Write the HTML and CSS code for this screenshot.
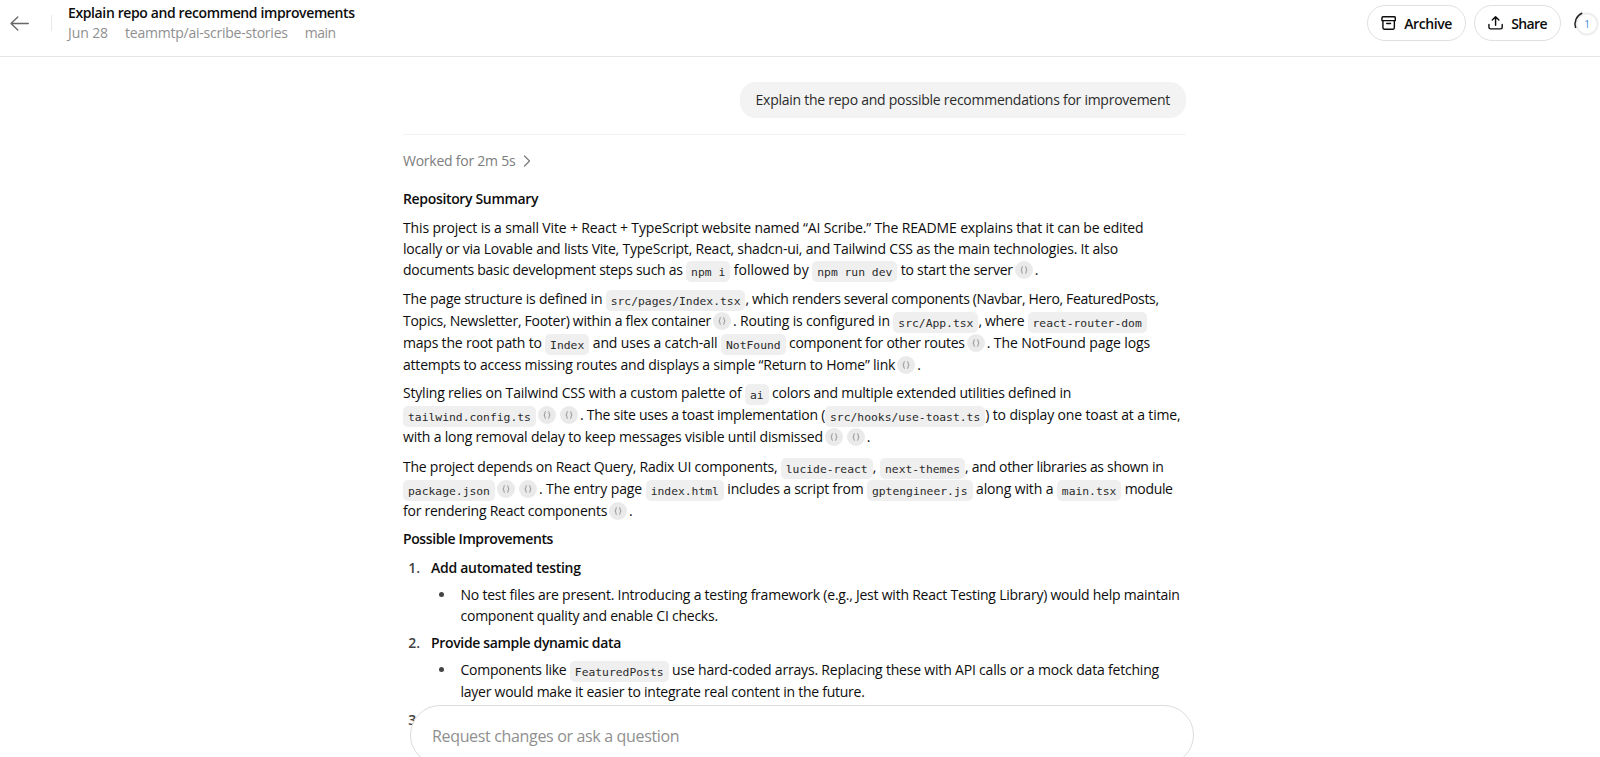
FILE: index.html
```html
<!DOCTYPE html>
<html lang="en">
<head>
<meta charset="utf-8">
<title>Explain repo and recommend improvements</title>
<link rel="stylesheet" href="styles.css">
</head>
<body>
<svg class="defs" width="0" height="0"><symbol id="cite" viewBox="0 0 12 12"><path d="M4.500 2C3.200 2 3.400 3 3.400 4.200 3.400 5.200 3 5.800 2.200 6 3 6.200 3.400 6.800 3.400 7.800 3.400 9 3.200 10 4.500 10M7.500 2C8.800 2 8.600 3 8.600 4.200 8.600 5.200 9 5.800 9.800 6 9 6.200 8.600 6.800 8.600 7.800 8.600 9 8.800 10 7.500 10" fill="none" stroke="currentColor" stroke-width="1"/></symbol></svg>
<div class="app">
  <header class="topbar">
    <div class="back-wrap">
      <svg class="back" viewBox="0 0 19 15" width="19" height="15"><path d="M18.300 7.500H1M7.800 1 1 7.500 7.800 14" fill="none" stroke="#666" stroke-width="1.300" stroke-linecap="round" stroke-linejoin="round"/></svg>
    </div>
    <div class="vrule"></div>
    <div class="heading">
      <div class="title">Explain repo and recommend improvements</div>
      <div class="meta"><span class="fit-10">Jun 28</span><span class="fit-23">teammtp/ai-scribe-stories</span><span class="meta-branch">main</span></div>
    </div>
    <div class="actions">
      <button class="pill archive">
        <svg viewBox="0 0 16 16" width="16" height="16"><path d="M2.200 1.500h11.600c.7 0 1.200.5 1.200 1.200V5.500H1V2.700C1 2 1.500 1.500 2.200 1.500ZM2 5.500v7.600c0 .8.6 1.400 1.400 1.400h9.200c.8 0 1.400-.6 1.400-1.400V5.500M6 8.500h4" fill="none" stroke="#0d0d0d" stroke-width="1.500" stroke-linecap="round" stroke-linejoin="round"/></svg>
        Archive
      </button>
      <button class="pill share">
        <svg viewBox="0 0 16 16" width="16" height="16"><path d="M8 10.500V1.500M4.500 4.800 8 1.300l3.500 3.500M1 9.500v3c0 1 .7 1.700 1.700 1.700h10.600c1 0 1.700-.7 1.700-1.700v-3" fill="none" stroke="#0d0d0d" stroke-width="1.500" stroke-linecap="round" stroke-linejoin="round"/></svg>
        Share
      </button>
      <div class="progress">
        <svg class="arc" viewBox="0 0 30 30" width="30" height="30"><circle cx="15" cy="15" r="10.500" fill="none" stroke="#eeeeee" stroke-width="2"/><path d="M3.700 19A12 12 0 0 1 10.200 4" fill="none" stroke="#222" stroke-width="1.500"/></svg>
        <span class="count">1</span>
      </div>
    </div>
  </header>

  <main class="thread">
    <div class="column">
      <div class="user-row"><div class="bubble">Explain the repo and possible recommendations for improvement</div></div>
      <hr class="sep">
      <div class="worked">Worked for 2m 5s
        <svg viewBox="0 0 8 14" width="8" height="14"><path d="M1.500 2l5 5-5 5" fill="none" stroke="#7d7d7d" stroke-width="1.300" stroke-linecap="round" stroke-linejoin="round"/></svg>
      </div>
      <article class="answer">
        <p class="strong"><span class="fit-34">Repository Summary</span></p>
        <p class="lead"><span class="fit-15">This project is a small Vite + React + TypeScript website named “AI Scribe.” The README explains that it can be edited</span><br><span class="fit-21">locally or via Lovable and lists Vite, TypeScript, React, shadcn-ui, and Tailwind CSS as the main technologies. It also</span><br><span class="fit-27">documents basic development steps such as </span><code>npm i</code><span class="fit-03"> followed by </span><code>npm run dev</code><span class="fit-25"> to start the server</span><span class="cite"><svg><use href="#cite"/></svg></span>.</p>
        <p><span class="fit-21">The page structure is defined in </span><code>src/pages/Index.tsx</code><span class="fit-34">, which renders several components (Navbar, Hero, FeaturedPosts,</span><br><span class="fit-27">Topics, Newsletter, Footer) within a flex container</span><span class="cite"><svg><use href="#cite"/></svg></span><span class="fit-17">. Routing is configured in </span><code>src/App.tsx</code><span class="fit-34">, where </span><code>react-router-dom</code><br><span class="fit-20">maps the root path to </span><code>Index</code><span class="fit-14"> and uses a catch-all </span><code>NotFound</code><span class="fit-27"> component for other routes</span><span class="cite"><svg><use href="#cite"/></svg></span><span class="fit-10">. The NotFound page logs</span><br><span class="fit-21">attempts to access missing routes and displays a simple “Return to Home” link</span><span class="cite"><svg><use href="#cite"/></svg></span>.</p>
        <p class="third"><span class="fit-19">Styling relies on Tailwind CSS with a custom palette of </span><code>ai</code><span class="fit-23"> colors and multiple extended utilities defined in</span><br><code>tailwind.config.ts</code><span class="cite"><svg><use href="#cite"/></svg></span><span class="cite"><svg><use href="#cite"/></svg></span><span class="fit-25">. The site uses a toast implementation (</span><code>src/hooks/use-toast.ts</code><span class="fit-14">) to display one toast at a time,</span><br><span class="fit-19">with a long removal delay to keep messages visible until dismissed</span><span class="cite"><svg><use href="#cite"/></svg></span><span class="cite"><svg><use href="#cite"/></svg></span>.</p>
        <p><span class="fit-24">The project depends on React Query, Radix UI components, </span><code>lucide-react</code>, <code>next-themes</code><span class="fit-31">, and other libraries as shown in</span><br><code>package.json</code><span class="cite"><svg><use href="#cite"/></svg></span><span class="cite"><svg><use href="#cite"/></svg></span><span class="fit-10">. The entry page </span><code>index.html</code><span class="fit-21"> includes a script from </span><code>gptengineer.js</code><span class="fit-14"> along with a </span><code>main.tsx</code><span class="fit-34"> module</span><br><span class="fit-25">for rendering React components</span><span class="cite"><svg><use href="#cite"/></svg></span>.</p>
        <p class="strong"><span class="fit-39">Possible Improvements</span></p>
        <ol>
          <li><span class="strong"><span class="fit-27">Add automated testing</span></span>
            <ul><li><span class="fit-23">No test files are present. Introducing a testing framework (e.g., Jest with React Testing Library) would help maintain</span><br><span class="fit-24">component quality and enable CI checks.</span></li></ul>
          </li>
          <li><span class="strong"><span class="fit-34">Provide sample dynamic data</span></span>
            <ul class="loose"><li><span class="fit-26">Components like </span><code>FeaturedPosts</code><span class="fit-19"> use hard-coded arrays. Replacing these with API calls or a mock data fetching</span><br><span class="fit-25">layer would make it easier to integrate real content in the future.</span></li></ul>
          </li>
          <li></li>
        </ol>
      </article>
    </div>
  </main>

  <div class="composer">Request changes or ask a question</div>
</div>
</body>
</html>
```
FILE: styles.css
```css
* { box-sizing: border-box; }
html, body { margin: 0; height: 100%; overflow: hidden; background: #fff; }
body { font-family: "Open Sans", "Noto Sans", sans-serif; font-size: 14px; color: #0d0d0d; }
.defs { position: absolute; }
.app { position: relative; height: 757px; overflow: hidden; display: flex; flex-direction: column; }

.topbar { height: 57px; flex: none; display: flex; align-items: center; border-bottom: 1px solid #e5e5e5; padding-bottom: 1px; }
.back-wrap { width: 51px; display: flex; padding-left: 9.500px; margin-top: -8px; }
.vrule { width: 1px; height: 16px; background: #e8e8e8; margin-right: 16px; margin-top: -9px; }
.heading { flex: 1; display: flex; flex-direction: column; margin-top: -9px; }
.title { font-size: 14px; line-height: 20px; font-weight: 600; color: #0d0d0d; letter-spacing: -0.38px; }
.meta { display: flex; gap: 17px; font-size: 14px; line-height: 20px; color: #8f8f8f; }
.meta-branch { letter-spacing: -0.5px; }
.actions { display: flex; align-items: center; gap: 8px; margin-top: -9px; }
.pill { height: 36px; display: flex; align-items: center; gap: 8px; border: 1px solid #e0e0e0; border-radius: 18px; background: #fff; font: 600 14px "Open Sans", sans-serif; color: #0d0d0d; letter-spacing: -0.41px; padding: 0 13px; }
.archive { width: 99px; }
.share { width: 87px; letter-spacing: -0.6px; }
.progress { position: relative; width: 31px; height: 30px; }
.arc { position: absolute; left: 3px; top: 1px; }
.count { position: absolute; left: 3px; top: 1px; width: 30px; text-align: center; font-size: 10px; line-height: 30px; color: #3a8be0; }

.thread { flex: 1; min-height: 0; overflow: hidden; }
.column { width: 783px; margin-left: 403px; padding-top: 25px; }
.user-row { display: flex; justify-content: flex-end; }
.bubble { height: 36px; display: flex; align-items: center; padding: 0 16px 2px; background: #f3f3f3; border-radius: 16px; color: #2b2b2b; letter-spacing: -0.26px; white-space: nowrap; }
.sep { border: 0; border-top: 1px solid #f3f3f3; margin: 16px 0 0; }
.worked { display: flex; align-items: center; gap: 8px; margin-top: 16px; line-height: 20px; color: #7d7d7d; letter-spacing: -0.24px; }
.answer { margin-top: 17px; line-height: 22px; color: #0d0d0d; white-space: nowrap; }
.answer p { margin: 0 0 6px; }
.answer p.third { margin-bottom: 8px; }
.answer .strong { font-weight: 600; }
.answer p.strong { margin-bottom: 7px; }
.answer p.lead { line-height: 21px; margin-bottom: 8px; }
.answer ol { margin: 0; padding: 0 0 0 28px; }
.answer ol > li { margin-bottom: 6px; font-weight: 600; }
.answer ol > li::marker { font-weight: 600; color: #444; content: counter(list-item) ".\00a0\00a0\00a0"; }
.answer ul { margin: 5px 0 0; padding: 0 0 0 29.500px; font-weight: 400; line-height: 21px; list-style: none; }
.answer ul.loose { line-height: 22px; }
.answer ul > li { position: relative; }
.answer ul > li::before { content: ""; position: absolute; left: -21.500px; top: 8px; width: 5px; height: 5px; border-radius: 50%; background: #444; }
.fit-03 { letter-spacing: -0.03px; }
.fit-10 { letter-spacing: -0.10px; }
.fit-14 { letter-spacing: -0.14px; }
.fit-15 { letter-spacing: -0.15px; }
.fit-17 { letter-spacing: -0.17px; }
.fit-19 { letter-spacing: -0.19px; }
.fit-20 { letter-spacing: -0.20px; }
.fit-21 { letter-spacing: -0.21px; }
.fit-23 { letter-spacing: -0.23px; }
.fit-24 { letter-spacing: -0.24px; }
.fit-25 { letter-spacing: -0.25px; }
.fit-26 { letter-spacing: -0.26px; }
.fit-27 { letter-spacing: -0.27px; }
.fit-31 { letter-spacing: -0.31px; }
.fit-34 { letter-spacing: -0.34px; }
.fit-39 { letter-spacing: -0.39px; }
code { font-family: "DejaVu Sans Mono", monospace; font-size: 11.350px; line-height: 1; letter-spacing: 0; background: #efefef; border-radius: 5px; padding: 3.500px 5px; color: #2b2b2b; }
.cite { display: inline-flex; align-items: center; justify-content: center; width: 18px; height: 18px; margin: 2px 2px 0; border-radius: 50%; background: #eaeaea; color: #7d7d7d; vertical-align: top; }
.cite svg { width: 10px; height: 10px; }

.composer { position: absolute; left: 410px; top: 705px; width: 784px; height: 60px; border: 1px solid #dcdcdc; border-radius: 30px; background: #fff; padding: 19px 21px; font-size: 16px; line-height: 22px; color: #8f8f8f; letter-spacing: -0.336px; white-space: nowrap; }
```
